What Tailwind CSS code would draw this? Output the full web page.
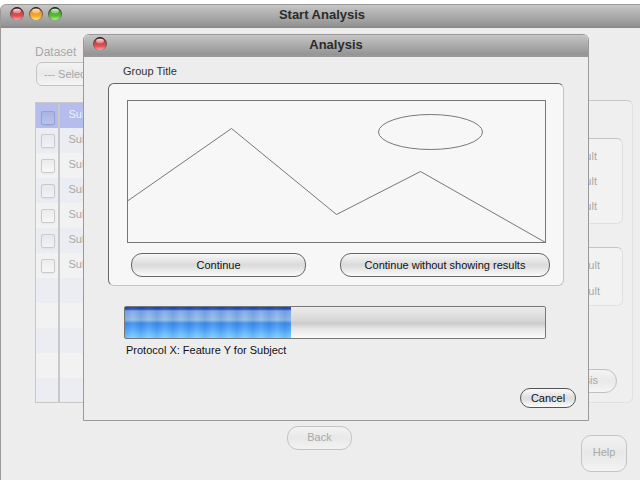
<!DOCTYPE html>
<html lang="en">
<head>
<meta charset="utf-8">
<title>Start Analysis</title>
<script src="https://cdn.jsdelivr.net/npm/@tailwindcss/browser@4"></script>
</head>
<body class="h-screen overflow-hidden bg-white pt-1 font-['Liberation_Sans',Arial,sans-serif] text-[11px] leading-4 text-[#111]">
<svg class="absolute size-0" aria-hidden="true">
  <defs>
    <linearGradient id="gr" x2="0" y2="1"><stop offset="0" stop-color="#6a1a1a"/><stop offset=".35" stop-color="#c84444"/><stop offset=".65" stop-color="#e05050"/><stop offset="1" stop-color="#ffb0aa"/></linearGradient>
    <linearGradient id="go" x2="0" y2="1"><stop offset="0" stop-color="#7a3c00"/><stop offset=".35" stop-color="#ee9626"/><stop offset=".65" stop-color="#f8a828"/><stop offset="1" stop-color="#fff088"/></linearGradient>
    <linearGradient id="gg" x2="0" y2="1"><stop offset="0" stop-color="#124408"/><stop offset=".35" stop-color="#4aa82c"/><stop offset=".65" stop-color="#58c030"/><stop offset="1" stop-color="#c0fa90"/></linearGradient>
    <linearGradient id="gs" x2="0" y2="1"><stop offset="0" stop-color="#fff" stop-opacity=".9"/><stop offset="1" stop-color="#fff" stop-opacity=".25"/></linearGradient>
    <linearGradient id="rim" x2="0" y2="1"><stop offset="0" stop-color="#222"/><stop offset=".6" stop-color="#444" stop-opacity=".6"/><stop offset="1" stop-color="#999"/></linearGradient>
    <g id="shine"><circle cx="7" cy="7" r="6.5" fill="none" stroke="url(#rim)"/><ellipse cx="7" cy="4.1" rx="3.9" ry="2.400" fill="url(#gs)"/></g>
  </defs>
</svg>
<div class="flex h-full flex-col rounded-tl-md border-l border-[#999] bg-[#ededed]">
  <header class="flex h-6 shrink-0 items-center rounded-tl-md border-t border-b-2 border-t-[#999] border-b-[#8c8c8c] bg-linear-to-b from-[#c6c6c6] to-[#939393] pl-[9px]">
    <div class="flex gap-[5px] pb-[3px]">
      <button aria-label="Close" class="block"><svg class="block size-3.5" viewBox="0 0 14 14"><circle cx="7" cy="7" r="6.5" fill="url(#gr)"/><use href="#shine"/></svg></button>
      <button aria-label="Minimize" class="block"><svg class="block size-3.5" viewBox="0 0 14 14"><circle cx="7" cy="7" r="6.5" fill="url(#go)"/><use href="#shine"/></svg></button>
      <button aria-label="Zoom" class="block"><svg class="block size-3.5" viewBox="0 0 14 14"><circle cx="7" cy="7" r="6.5" fill="url(#gg)"/><use href="#shine"/></svg></button>
    </div>
    <h1 class="flex-1 pr-[58px] pb-px text-center text-[13px] font-bold text-[#2b2b2b]">Start Analysis</h1>
  </header>

  <main class="relative flex-1 text-[#a8a8a8]">
    <div class="flex items-end justify-between pt-4 pr-[7px] pl-[34px]">
      <div class="w-[220px]">
        <label for="dataset" class="block text-[12px]">Dataset</label>
        <select id="dataset" class="mt-0.5 mb-4 ml-px block h-6 w-[150px] appearance-none rounded-md border border-[#c4c4c4] bg-linear-to-b from-[#f3f3f3] via-[#e9e9e9] to-[#f5f5f5] px-[7px]"><option>--- Select ---</option></select>
        <table class="w-full border-collapse border border-[#c8c8c8] text-left">
          <tbody>
            <tr class="h-[25px] bg-[#b4bdec] text-[#f0f0fa]"><td class="w-[23px] border-r-2 border-[#c8c8c8] p-0 pt-1.5 pl-[5px]"><input type="checkbox" aria-label="Select subject 1" class="block size-3.5 appearance-none rounded-xs border border-[#98a2cc] bg-linear-to-b from-[#a9b3e2] to-[#bac3ef] shadow-xs"></td><td class="p-0 pb-[3px] pl-[9px]">Subject 1</td></tr>
            <tr class="h-[25px] bg-[#ebedf2]"><td class="border-r-2 border-[#c8c8c8] p-0 pt-0.5 pl-[5px]"><input type="checkbox" aria-label="Select subject 2" class="block size-3.5 appearance-none rounded-xs border border-[#cacaca] bg-linear-to-b from-[#e6e8ed] to-[#f0f2f7] shadow-xs"></td><td class="p-0 pb-[3px] pl-[9px]">Subject 2</td></tr>
            <tr class="h-[25px] bg-[#f2f2f2]"><td class="border-r-2 border-[#c8c8c8] p-0 pt-0.5 pl-[5px]"><input type="checkbox" aria-label="Select subject 3" class="block size-3.5 appearance-none rounded-xs border border-[#cacaca] bg-linear-to-b from-[#ececec] to-[#f7f7f7] shadow-xs"></td><td class="p-0 pb-[3px] pl-[9px]">Subject 3</td></tr>
            <tr class="h-[25px] bg-[#ebedf2]"><td class="border-r-2 border-[#c8c8c8] p-0 pt-0.5 pl-[5px]"><input type="checkbox" aria-label="Select subject 4" class="block size-3.5 appearance-none rounded-xs border border-[#cacaca] bg-linear-to-b from-[#e6e8ed] to-[#f0f2f7] shadow-xs"></td><td class="p-0 pb-[3px] pl-[9px]">Subject 4</td></tr>
            <tr class="h-[25px] bg-[#f2f2f2]"><td class="border-r-2 border-[#c8c8c8] p-0 pt-0.5 pl-[5px]"><input type="checkbox" aria-label="Select subject 5" class="block size-3.5 appearance-none rounded-xs border border-[#cacaca] bg-linear-to-b from-[#ececec] to-[#f7f7f7] shadow-xs"></td><td class="p-0 pb-[3px] pl-[9px]">Subject 5</td></tr>
            <tr class="h-[25px] bg-[#ebedf2]"><td class="border-r-2 border-[#c8c8c8] p-0 pt-0.5 pl-[5px]"><input type="checkbox" aria-label="Select subject 6" class="block size-3.5 appearance-none rounded-xs border border-[#cacaca] bg-linear-to-b from-[#e6e8ed] to-[#f0f2f7] shadow-xs"></td><td class="p-0 pb-[3px] pl-[9px]">Subject 6</td></tr>
            <tr class="h-[25px] bg-[#f2f2f2]"><td class="border-r-2 border-[#c8c8c8] p-0 pt-0.5 pl-[5px]"><input type="checkbox" aria-label="Select subject 7" class="block size-3.5 appearance-none rounded-xs border border-[#cacaca] bg-linear-to-b from-[#ececec] to-[#f7f7f7] shadow-xs"></td><td class="p-0 pb-[3px] pl-[9px]">Subject 7</td></tr>
            <tr class="h-[25px] bg-[#ebedf2]"><td class="border-r-2 border-[#c8c8c8]"></td><td></td></tr>
            <tr class="h-[25px] bg-[#f2f2f2]"><td class="border-r-2 border-[#c8c8c8]"></td><td></td></tr>
            <tr class="h-[25px] bg-[#ebedf2]"><td class="border-r-2 border-[#c8c8c8]"></td><td></td></tr>
            <tr class="h-[25px] bg-[#f2f2f2]"><td class="border-r-2 border-[#c8c8c8]"></td><td></td></tr>
            <tr class="h-[25px] bg-[#ebedf2]"><td class="border-r-2 border-[#c8c8c8]"></td><td></td></tr>
          </tbody>
        </table>
      </div>
      <section class="flex h-[303px] w-[220px] flex-col rounded-md border border-[#e0e0e0] border-t-[#c8c8c8] bg-[#efefef] pt-[37px] pr-[9px] pl-3">
        <ul class="flex h-[86px] flex-col gap-[9px] rounded-md border border-[#e0e0e0] border-t-[#c4c4c4] bg-[#f2f2f2] pt-[9px] pr-[25px] text-right">
          <li>Result</li><li>Result</li><li>Result</li>
        </ul>
        <ul class="mt-[23px] flex h-[59px] flex-col gap-[10px] rounded-md border border-[#e0e0e0] border-t-[#c4c4c4] bg-[#f2f2f2] pt-[9px] pr-[22px] text-right">
          <li>Result</li><li>Result</li>
        </ul>
        <button class="mt-[63px] mr-1.5 h-6 w-[100px] shrink-0 self-end rounded-xl border border-[#c0c0c0] bg-linear-to-b from-[#f4f4f4] via-[#e9e9e9] to-[#f5f5f5] pr-[18px] pb-0.5 text-right">Analysis</button>
      </section>
    </div>
    <footer class="grid grid-cols-[1fr_auto_1fr] items-start pt-[23px] pr-[13px]">
      <button class="col-start-2 ml-[11px] h-6 w-[65px] rounded-[11px] border border-[#c4c4c4] bg-linear-to-b from-[#f2f2f2] via-[#e9e9e9] to-[#f2f2f2] pb-0.5">Back</button>
      <button class="mt-[9px] h-[37px] w-[46px] justify-self-end rounded-[10px] border border-[#c4c4c4] bg-linear-to-b from-[#f2f2f2] via-[#e8e8e8] to-[#f3f3f3] pb-1">Help</button>
    </footer>

    <div role="dialog" aria-labelledby="dlg-title" class="absolute top-1.5 right-[51px] left-[82px] rounded-t-md border border-[#999] bg-[#ededed] text-[#111]">
      <header class="flex h-[22px] items-center rounded-t-md border-b-2 border-[#999] bg-linear-to-b from-[#c6c6c6] to-[#939393] pl-[9px]">
        <button aria-label="Close dialog" class="block pb-[3px]"><svg class="block size-3.5" viewBox="0 0 14 14"><circle cx="7" cy="7" r="6.5" fill="url(#gr)"/><use href="#shine"/></svg></button>
        <h2 id="dlg-title" class="flex-1 pr-[23px] text-center text-[13px] font-bold text-[#2b2b2b]">Analysis</h2>
      </header>
      <div class="px-6 pt-1.5">
        <h3 class="mb-1 pl-[15px] text-[#333]">Group Title</h3>
        <section class="rounded-md border border-[#666] border-r-[#c4c4c4] border-b-[#c4c4c4] bg-[#f7f7f7] pt-4 pr-[17px] pb-2 pl-[18px]">
          <svg class="block h-[143px] w-full" viewBox="0 0 419 143" preserveAspectRatio="none" fill="none" stroke="#777" role="img" aria-label="Preview">
            <rect x=".5" y=".5" width="418" height="142"/>
            <path d="M.5 101 104.5 28.5 209.5 114.500 293.500 71.500 418.500 142.500"/>
            <ellipse cx="303.500" cy="32" rx="52" ry="17.500"/>
          </svg>
          <div class="-mr-1 flex justify-between pt-2.5 pl-1">
            <button class="h-6 w-[175px] rounded-[11px] border border-[#666] bg-linear-to-b from-[#f8f8f8] via-[#dadada] to-[#fbfbfb] pb-px">Continue</button>
            <button class="h-6 w-[210px] rounded-[11px] border border-[#666] bg-linear-to-b from-[#f8f8f8] via-[#dadada] to-[#fbfbfb] pb-px">Continue without showing results</button>
          </div>
        </section>
      </div>
      <div class="pt-5 pr-[42px] pl-10">
        <progress id="run" max="1000" value="395" class="block h-[33px] w-full appearance-none overflow-hidden rounded-xs border border-[#777] [&::-webkit-progress-bar]:bg-[linear-gradient(#ececec,#d6d6d6_45%,#cacaca_52%,#e6e6e6_70%,#fafafa)] [&::-webkit-progress-value]:bg-[repeating-linear-gradient(90deg,#0a50c020_0,#ffffff14_8px,#0a50c020_16px),linear-gradient(#1c44b4_0,#1c44b4_6%,#7fa8e4_13%,#94bce8_42%,#3f8ce6_52%,#4aa0f8_68%,#80d0ff)]"></progress>
        <label for="run" class="mt-[3px] block pl-0.5">Protocol X: Feature Y for Subject</label>
      </div>
      <div class="flex justify-end pt-[30px] pr-3 pb-3">
        <button class="h-5 w-14 rounded-[10px] border border-[#555] bg-linear-to-b from-[#fafafa] via-[#dcdcdc] to-[#fbfbfb] pb-px">Cancel</button>
      </div>
    </div>
  </main>
</div>
</body>
</html>
